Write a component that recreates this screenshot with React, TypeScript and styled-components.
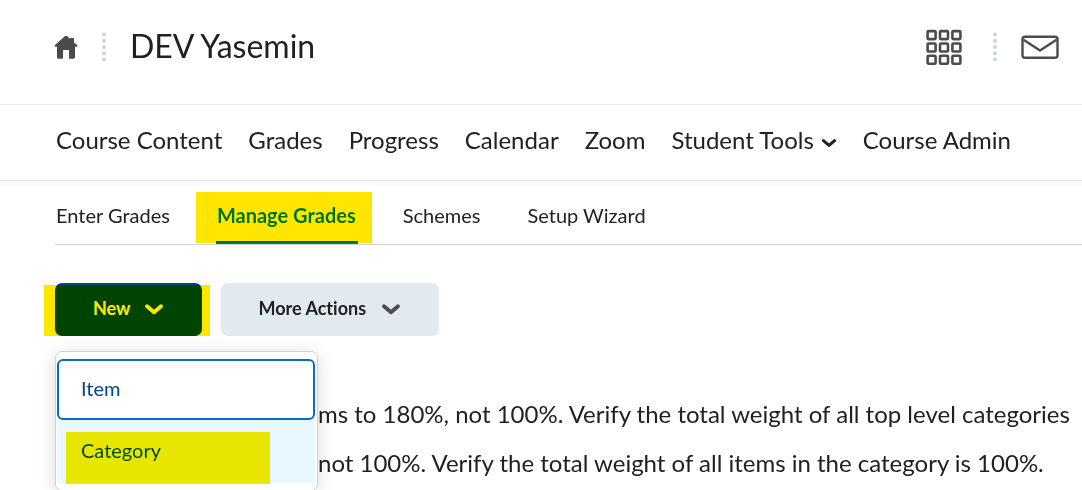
import React from "react";
import styled, { createGlobalStyle } from "styled-components";

const GlobalStyle = createGlobalStyle`
  * { box-sizing: border-box; }
  body {
    margin: 0;
    background: #fff;
    color: #202122;
    font-family: Lato, "Liberation Sans", sans-serif;
    font-variant-ligatures: none;
  }
  button { font-family: inherit; font-variant-ligatures: inherit; cursor: pointer; }
  a { color: inherit; text-decoration: none; }
`;

const Page = styled.div`
  min-height: 100vh;
  overflow: clip;
`;

const Header = styled.header`
  display: flex;
  align-items: center;
  height: 105px;
  padding: 0 23px 10px 54px;
  border-bottom: 1px solid #e6e8eb;
`;

const IconLink = styled.a`
  display: block;
  line-height: 0;
`;

const IconButton = styled.button`
  padding: 0;
  border: 0;
  background: none;
  line-height: 0;
`;

const Separator = styled.span<{ $before: number; $after: number }>`
  line-height: 0;
  margin-left: ${(p) => p.$before}px;
  margin-right: ${(p) => p.$after}px;
`;

const Title = styled.h1`
  flex: 1;
  margin: 0;
  padding-bottom: 2px;
  font-size: 32px;
  line-height: 40px;
  font-weight: 400;
`;

const Nav = styled.nav`
  display: flex;
  align-items: center;
  gap: 26px;
  height: 76px;
  padding: 0 56px 6px;
  border-bottom: 1px solid #e6e8eb;
  font-size: 24px;
  line-height: 32px;
  white-space: nowrap;
`;

const NavButton = styled.button`
  display: flex;
  align-items: center;
  gap: 7px;
  padding: 0;
  border: 0;
  background: none;
  color: inherit;
  font-size: 24px;
  line-height: 32px;

  svg {
    margin-top: 4px;
  }
`;

const Main = styled.main`
  padding-left: 55px;
  border-top: 5px solid #fafafa;
`;

const Tabs = styled.nav`
  display: flex;
  gap: 44px;
  height: 59px;
  border-bottom: 1px solid #cdd5dc;
  font-size: 20px;
  line-height: 24px;
  white-space: nowrap;
`;

const Tab = styled.a<{ $active?: boolean }>`
  position: relative;
  height: 58px;
  padding: 17px 2px 0 1px;
  font-weight: ${(p) => (p.$active ? 700 : 400)};
  color: ${(p) => (p.$active ? "#006fbf" : "inherit")};
  border-bottom: ${(p) => (p.$active ? "3px solid #006fbf" : "0")};
`;

/* Marker-pen overlay: darkens whatever lies beneath it. */
const Marker = styled.span<{ $inset: string }>`
  position: absolute;
  inset: ${(p) => p.$inset};
  background: #ffe600;
  mix-blend-mode: darken;
  pointer-events: none;
`;

const Actions = styled.div`
  display: flex;
  gap: 19px;
  margin-top: 38px;
`;

const MenuAnchor = styled.div`
  position: relative;
`;

const ActionButton = styled.button<{ $primary?: boolean }>`
  display: flex;
  align-items: center;
  gap: ${(p) => (p.$primary ? 13 : 15)}px;
  height: 53px;
  padding: 0 38px 3px;
  border: 0;
  border-radius: 7px;
  background: ${(p) => (p.$primary ? "#004489" : "#e3e9f1")};
  color: ${(p) => (p.$primary ? "#fff" : "#202122")};
  font-size: 18px;
  line-height: 24px;
  font-weight: 700;
  white-space: nowrap;
`;

const Menu = styled.div`
  position: absolute;
  z-index: 1;
  top: 68px;
  left: 0;
  width: 263px;
  padding: 7px 2px 7px 1px;
  border: 1px solid #cdd5dc;
  border-radius: 7px;
  background: #fff;
  box-shadow: 0 3px 18px rgba(0, 0, 0, 0.15);
`;

const MenuItem = styled.button<{ $focus?: boolean }>`
  display: block;
  position: relative;
  width: 100%;
  height: ${(p) => (p.$focus ? 61 : 63)}px;
  padding: 0 22px 4px;
  border: 2px solid ${(p) => (p.$focus ? "#006fbf" : "#e8f8ff")};
  border-radius: ${(p) => (p.$focus ? 6 : 0)}px;
  background: ${(p) => (p.$focus ? "#fff" : "#e8f8ff")};
  color: #004489;
  font-size: 20px;
  line-height: 24px;
  text-align: left;
`;

const Messages = styled.div`
  margin-top: 53px;
  padding-left: 263px;
  overflow: hidden;
  font-size: 24px;
  line-height: 49px;
  white-space: nowrap;
`;

const Message = styled.p`
  margin: 0;
`;

const HomeIcon = () => (
  <svg width="24" height="24" viewBox="0 0 24 24" fill="#494c4e" aria-hidden="true">
    <path d="M12 .8c.5 0 .9.2 1.200.5l2.800 2.400V3.500c0-.3.2-.5.500-.5h3c.3 0 .5.2.500.5v3.900l3.100 2.700c.5.4.5 1 .2 1.400-.3.400-.9.500-1.300.2H21V22c0 1-.8 1.800-1.800 1.800H16c-.6 0-1-.4-1-1V16c0-.6-.4-1-1-1h-4c-.6 0-1 .4-1 1v6.800c0 .6-.4 1-1 1H4.800C3.800 23.800 3 23 3 22V11.700h-.9c-.5.3-1 .2-1.300-.2-.3-.4-.3-1 .2-1.400l9.800-8.800c.3-.3.700-.5 1.200-.5z" />
  </svg>
);

const DotsIcon = () => (
  <svg width="4" height="30" viewBox="0 0 4 30" fill="#cdd5dc" aria-hidden="true">
    {[2.5, 8.7, 14.9, 21.2, 27.5].map((y) => (
      <circle key={y} cx="2" cy={y} r="2" />
    ))}
  </svg>
);

const GridIcon = () => (
  <svg width="36" height="36" viewBox="0 0 36 36" fill="none" stroke="#494c4e" strokeWidth="2.6" aria-hidden="true">
    {[2.1, 14.5, 26.7].map((y) =>
      [1.6, 14, 26.4].map((x) => (
        <rect key={`${x}-${y}`} x={x} y={y} width="8" height="8" rx="1" />
      ))
    )}
  </svg>
);

const MailIcon = () => (
  <svg width="38" height="24" viewBox="0 0 38 24" fill="none" stroke="#494c4e" strokeWidth="2.4" strokeLinejoin="round" aria-hidden="true">
    <rect x="1.5" y="1.8" width="35" height="21" rx="2.5" />
    <path d="M2.500 4.800 19 15.600 35.500 4.800" />
  </svg>
);

const Chevron = ({ color, width = 20 }: { color: string; width?: number }) => (
  <svg width={width} height={width} viewBox="0 0 20 20" fill="none" stroke={color} strokeWidth="3.8" strokeLinecap="round" strokeLinejoin="round" aria-hidden="true">
    <path d="M3 8.300 10 14.200 17 8.300" />
  </svg>
);

export default function App() {
  return (
    <Page>
      <GlobalStyle />
      <Header>
        <IconLink href="#" aria-label="Home"><HomeIcon /></IconLink>
        <Separator $before={24} $after={24}><DotsIcon /></Separator>
        <Title>DEV Yasemin</Title>
        <IconButton aria-label="Select a course"><GridIcon /></IconButton>
        <Separator $before={31} $after={24}><DotsIcon /></Separator>
        <IconButton aria-label="Messages"><MailIcon /></IconButton>
      </Header>
      <Nav aria-label="Course">
        <a href="#">Course Content</a>
        <a href="#">Grades</a>
        <a href="#">Progress</a>
        <a href="#">Calendar</a>
        <a href="#">Zoom</a>
        <NavButton>Student Tools <Chevron color="#202122" width={16} /></NavButton>
        <a href="#">Course Admin</a>
      </Nav>
      <Main>
        <Tabs aria-label="Grades">
          <Tab href="#">Enter Grades</Tab>
          <Tab href="#" $active aria-current="page">
            Manage Grades
            <Marker $inset="6px -14px -2px -20px" />
          </Tab>
          <Tab href="#">Schemes</Tab>
          <Tab href="#">Setup Wizard</Tab>
        </Tabs>
        <Actions>
          <MenuAnchor>
            <ActionButton $primary aria-haspopup="menu" aria-expanded="true">
              New <Chevron color="#fff" />
            </ActionButton>
            <Marker $inset="2px -8px 0 -11px" />
            <Menu role="menu">
              <MenuItem role="menuitem" $focus>Item</MenuItem>
              <MenuItem role="menuitem">
                Category
                <Marker $inset="10px 43px -3px 7px" />
              </MenuItem>
            </Menu>
          </MenuAnchor>
          <ActionButton aria-haspopup="menu">
            More Actions <Chevron color="#494c4e" />
          </ActionButton>
        </Actions>
        <Messages>
          <Message>ms to 180%, not 100%. Verify the total weight of all top level categories</Message>
          <Message>not 100%. Verify the total weight of all items in the category is 100%.</Message>
        </Messages>
      </Main>
    </Page>
  );
}
